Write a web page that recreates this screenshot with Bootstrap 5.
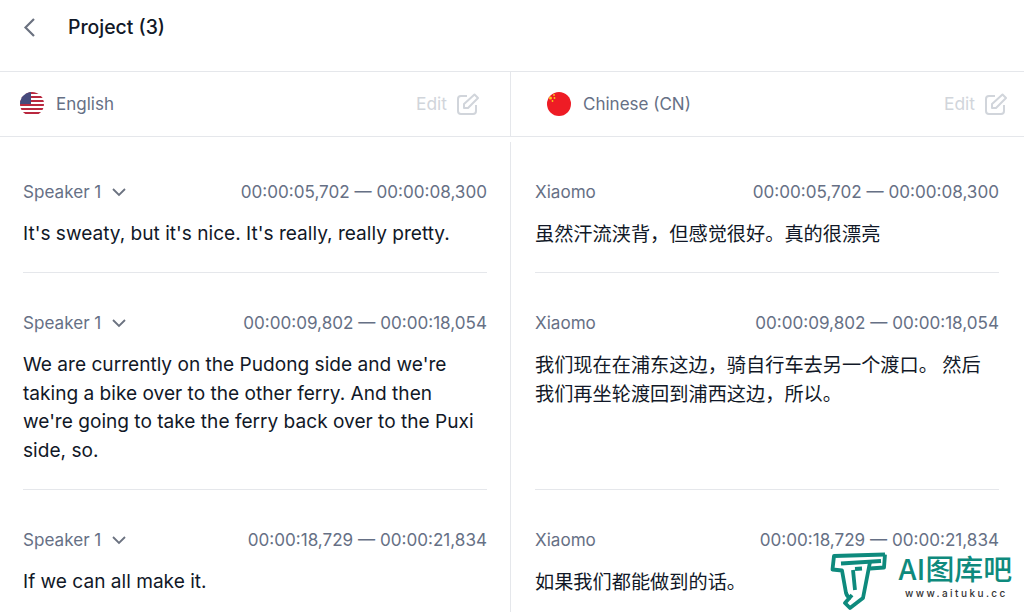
<!doctype html>
<html lang="en">
<head>
<meta charset="utf-8">
<title>Project (3)</title>
<link href="https://cdn.jsdelivr.net/npm/bootstrap@5.3.0/dist/css/bootstrap.min.css" rel="stylesheet">
<style>
html,body{height:612px;overflow:hidden}
body{font-family:Inter,"Noto Sans CJK SC",sans-serif;background:#fff;color:#111827;position:relative}
.top-head{height:72px;border-bottom:1px solid #e5e7eb;padding:13px 0 0 23px;gap:31px}
.top-title{font-size:19.4px;font-weight:500;line-height:28px;color:#111827}
.lang-bar{height:65px;border-bottom:1px solid #e5e7eb}
.side-l{width:511px;flex:none;border-right:1px solid #e5e7eb}
.side-r{flex:1 1 0;min-width:0}
.lang-l{padding:0 31px 0 20px}
.lang-r{padding:0 17px 0 36px}
.lang-name{font-size:17px;line-height:24px;color:#667085;margin-left:12px}
.edit-word{font-size:17.4px;line-height:24px;color:#d1d5db;margin-right:6px}
.seg-rows{padding-top:5px}
.seg-l{padding:0 23px}
.seg-r{padding:0 25px 0 24px}
.seg-in{border-bottom:1px solid #e5e7eb;padding:37px 0 24px}
.seg-meta{font-size:17.1px;line-height:26px;color:#667085;margin-bottom:14px}
.seg-text{font-size:19.1px;line-height:28.8px;color:#111827;margin:0}
.seg-cjk{font-family:"Noto Sans CJK SC",sans-serif;font-size:19.2px}
.mark-box{position:absolute;left:826px;top:548px;width:198px;height:62px}
.mark-title{position:absolute;left:72.500px;top:4px;font-size:28.9px;line-height:30px;font-weight:500;color:#0e8a7d;white-space:nowrap;font-family:"Noto Sans CJK SC",sans-serif}
.mark-url{position:absolute;left:79px;top:38px;font-size:10px;line-height:14px;letter-spacing:2.45px;color:#333;white-space:nowrap;font-weight:500}
</style>
</head>
<body>
<header class="top-head d-flex align-items-start">
  <svg width="14" height="28" viewBox="0 0 14 28" fill="none" stroke="#6b7280" stroke-width="2.200" aria-hidden="true"><path d="M11 6 2.500 14.500 11 23"/></svg>
  <div class="top-title">Project (3)</div>
</header>
<div class="lang-bar d-flex">
  <div class="side-l lang-l d-flex align-items-center">
    <svg width="24" height="24" viewBox="0 0 24 24" aria-hidden="true"><defs><clipPath id="cu"><circle cx="12" cy="12" r="12"/></clipPath></defs><g clip-path="url(#cu)"><rect width="24" height="24" fill="#fff"/><g fill="#b9283f"><rect y="0" width="24" height="2"/><rect y="4" width="24" height="2"/><rect y="8" width="24" height="2"/><rect y="12" width="24" height="2"/><rect y="16" width="24" height="2"/><rect y="20" width="24" height="2"/></g><rect width="11" height="12" fill="#464a7c"/></g></svg>
    <span class="lang-name">English</span>
    <span class="ms-auto edit-word">Edit</span>
    <svg class="ms-1" width="22" height="22" viewBox="0 0 22 22" fill="none" stroke="#d1d5db" stroke-width="2" aria-hidden="true"><path d="M10 3H4a3 3 0 0 0-3 3v12a3 3 0 0 0 3 3h12a3 3 0 0 0 3-3v-6"/><path d="M7 15v-4L17.500 1.500l3.500 3.500L11 15z" stroke-linejoin="round"/></svg>
  </div>
  <div class="side-r lang-r d-flex align-items-center">
    <svg width="24" height="24" viewBox="0 0 24 24" aria-hidden="true"><circle cx="12" cy="12" r="12" fill="#ee1c25"/><g fill="#f9c81a"><circle cx="3.500" cy="6" r="1.500"/><circle cx="7" cy="3" r=".9"/><circle cx="7.500" cy="6" r=".9"/><circle cx="5.500" cy="9" r=".9"/></g></svg>
    <span class="lang-name">Chinese (CN)</span>
    <span class="ms-auto edit-word">Edit</span>
    <svg class="ms-1" width="22" height="22" viewBox="0 0 22 22" fill="none" stroke="#d1d5db" stroke-width="2" aria-hidden="true"><path d="M10 3H4a3 3 0 0 0-3 3v12a3 3 0 0 0 3 3h12a3 3 0 0 0 3-3v-6"/><path d="M7 15v-4L17.500 1.500l3.500 3.500L11 15z" stroke-linejoin="round"/></svg>
  </div>
</div>
<main class="seg-rows">
  <div class="d-flex">
    <div class="side-l seg-l"><div class="seg-in">
      <div class="seg-meta d-flex justify-content-between"><span class="d-inline-flex align-items-center">Speaker 1<svg class="ms-2" width="19" height="16" viewBox="0 0 19 16" fill="none" stroke="#6b7280" stroke-width="1.800"><path d="M4 5 10 11 16 5"/></svg></span><span>00:00:05,702 — 00:00:08,300</span></div>
      <p class="seg-text">It's sweaty, but it's nice. It's really, really pretty.</p>
    </div></div>
    <div class="side-r seg-r"><div class="seg-in h-100">
      <div class="seg-meta d-flex justify-content-between"><span>Xiaomo</span><span>00:00:05,702 — 00:00:08,300</span></div>
      <p class="seg-text seg-cjk">虽然汗流浃背，但感觉很好。真的很漂亮</p>
    </div></div>
  </div>
  <div class="d-flex">
    <div class="side-l seg-l"><div class="seg-in">
      <div class="seg-meta d-flex justify-content-between"><span class="d-inline-flex align-items-center">Speaker 1<svg class="ms-2" width="19" height="16" viewBox="0 0 19 16" fill="none" stroke="#6b7280" stroke-width="1.800"><path d="M4 5 10 11 16 5"/></svg></span><span>00:00:09,802 — 00:00:18,054</span></div>
      <p class="seg-text">We are currently on the Pudong side and we're taking a bike over to the other ferry. And then we're going to take the ferry back over to the Puxi side, so.</p>
    </div></div>
    <div class="side-r seg-r"><div class="seg-in h-100">
      <div class="seg-meta d-flex justify-content-between"><span>Xiaomo</span><span>00:00:09,802 — 00:00:18,054</span></div>
      <p class="seg-text seg-cjk">我们现在在浦东这边，骑自行车去另一个渡口。 然后我们再坐轮渡回到浦西这边，所以。</p>
    </div></div>
  </div>
  <div class="d-flex">
    <div class="side-l seg-l"><div class="seg-in">
      <div class="seg-meta d-flex justify-content-between"><span class="d-inline-flex align-items-center">Speaker 1<svg class="ms-2" width="19" height="16" viewBox="0 0 19 16" fill="none" stroke="#6b7280" stroke-width="1.800"><path d="M4 5 10 11 16 5"/></svg></span><span>00:00:18,729 — 00:00:21,834</span></div>
      <p class="seg-text">If we can all make it.</p>
    </div></div>
    <div class="side-r seg-r"><div class="seg-in h-100">
      <div class="seg-meta d-flex justify-content-between"><span>Xiaomo</span><span>00:00:18,729 — 00:00:21,834</span></div>
      <p class="seg-text seg-cjk">如果我们都能做到的话。</p>
    </div></div>
  </div>
</main>
<div class="mark-box">
  <svg width="66" height="62" viewBox="0 0 66 62" fill="none" stroke="#0e8a7d" stroke-width="3.800" stroke-linejoin="round" aria-hidden="true"><path d="M59 6.500 8 8 6.500 21.500 16 22.500 20 45Q21 49 25 50"/><path d="M59 6.500 58 19.500 44 20.500"/><path d="M15 15.500 55 13M27 22 29 42"/><path d="M44 14 37 50 24 60 19 55 26 47"/><path d="M36 20.500 29 21"/></svg>
  <div class="mark-title">AI图库吧</div>
  <div class="mark-url">www.aituku.cc</div>
</div>
<script src="https://cdn.jsdelivr.net/npm/bootstrap@5.3.0/dist/js/bootstrap.bundle.min.js"></script>
</body>
</html>
